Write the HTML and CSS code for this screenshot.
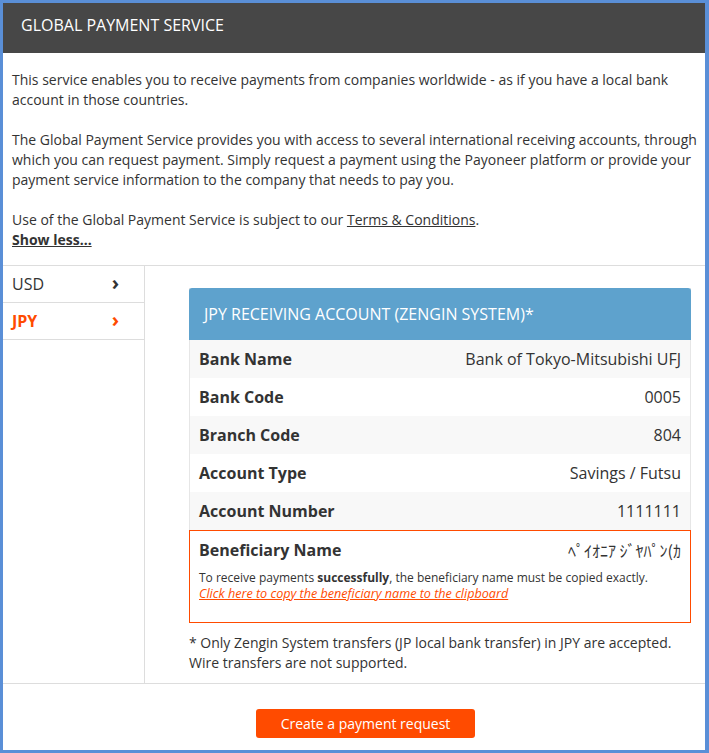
FILE: index.html
```html
<!DOCTYPE html>
<html>
<head>
<meta charset="utf-8">
<link rel="stylesheet" href="styles.css">
</head>
<body>
<div class="frame">
  <div class="topbar">GLOBAL PAYMENT SERVICE</div>
  <div class="intro">
    <p>This service enables you to receive payments from companies worldwide - as if you have a local bank account in those countries.</p>
    <p>The Global Payment Service provides you with access to several international receiving accounts, through which you can request payment. Simply request a payment using the Payoneer platform or provide your payment service information to the company that needs to pay you.</p>
    <p class="last">Use of the Global Payment Service is subject to our <a class="terms" href="#">Terms &amp; Conditions</a>.<br><a class="less" href="#">Show less...</a></p>
  </div>
  <div class="main">
    <div class="nav">
      <div class="nav-item"><span>USD</span><span class="chev">&#x203A;</span></div>
      <div class="nav-item active"><span>JPY</span><span class="chev">&#x203A;</span></div>
    </div>
    <div class="panel">
      <div class="card">
        <div class="card-head">JPY RECEIVING ACCOUNT (ZENGIN SYSTEM)*</div>
        <div class="row alt"><span class="lbl">Bank Name</span><span class="val">Bank of Tokyo-Mitsubishi UFJ</span></div>
        <div class="row"><span class="lbl">Bank Code</span><span class="val">0005</span></div>
        <div class="row alt"><span class="lbl">Branch Code</span><span class="val">804</span></div>
        <div class="row"><span class="lbl">Account Type</span><span class="val">Savings / Futsu</span></div>
        <div class="row alt"><span class="lbl">Account Number</span><span class="val">1111111</span></div>
        <div class="benef">
          <div class="benef-top"><span class="lbl">Beneficiary Name</span><span class="val jp">ﾍﾟｲｵﾆｱ ｼﾞﾔﾊﾟﾝ(ｶ</span></div>
          <div class="note">To receive payments <b>successfully</b>, the beneficiary name must be copied exactly.</div>
          <a class="copy" href="#">Click here to copy the beneficiary name to the clipboard</a>
        </div>
      </div>
      <p class="foot">* Only Zengin System transfers (JP local bank transfer) in JPY are accepted.<br>Wire transfers are not supported.</p>
    </div>
  </div>
  <div class="actions">
    <button class="btn">Create a payment request</button>
  </div>
</div>
</body>
</html>
```

FILE: styles.css
```css
html, body {
  margin: 0;
  padding: 0;
}
body {
  background: #5a8fd7;
  font-family: "Open Sans", "Noto Sans", sans-serif;
  color: #333;
  font-size: 14px;
  line-height: 20px;
}
.frame {
  margin: 3px 4px 3px 3px;
  background: #fff;
  height: 747px;
  display: flex;
  flex-direction: column;
}
.topbar {
  background: #474747;
  color: #fff;
  height: 44px;
  line-height: 44px;
  padding-bottom: 6px;
  font-size: 16px;
  padding-left: 18px;
  flex: none;
}
.intro {
  padding: 17px 2px 15px 9px;
  border-bottom: 1px solid #dddddd;
}
.intro p {
  margin: 0 0 20px 0;
}
.intro p.last {
  margin: 0;
}
.terms {
  color: #333;
  text-decoration: underline;
}
.less {
  color: #333;
  font-weight: 700;
  text-decoration: underline;
}
.main {
  display: flex;
  border-bottom: 1px solid #dddddd;
}
.nav {
  width: 141px;
  border-right: 1px solid #dddddd;
  flex: none;
}
.nav-item {
  height: 36px;
  border-bottom: 1px solid #dddddd;
  display: flex;
  align-items: center;
  justify-content: space-between;
  padding: 0 25px 0 9px;
  font-size: 16px;
  color: #333;
}
.nav-item .chev {
  font-weight: 700;
  font-size: 20px;
  line-height: 20px;
  margin-top: -3px;
}
.nav-item.active {
  color: #ff4b00;
  font-weight: 700;
}
.panel {
  flex: 1;
  padding: 22px 14px 10px 44px;
}
.card {
  border-left: 1px solid #e6e6e6;
  border-right: 1px solid #e6e6e6;
}
.card-head {
  background: #5ea2cd;
  color: #fff;
  height: 52px;
  line-height: 52px;
  font-size: 16px;
  padding-left: 15px;
  border-radius: 3px 3px 0 0;
  margin: 0 -1px;
}
.row {
  height: 38px;
  display: flex;
  align-items: center;
  justify-content: space-between;
  padding: 0 9px 0 9px;
}
.row.alt {
  background: #f8f8f8;
}
.lbl {
  font-weight: 700;
  font-size: 16px;
}
.val {
  font-size: 16px;
}
.jp {
  font-family: "Noto Sans CJK JP", sans-serif;
  font-size: 16px;
}
.benef {
  border: 1px solid #ff4b00;
  margin: 0 -1px;
  padding: 8px 9px 20px 9px;
}
.benef-top {
  display: flex;
  justify-content: space-between;
  align-items: center;
  height: 22px;
  margin-bottom: 9px;
}
.note {
  font-size: 12px;
  line-height: 16px;
}
.copy {
  display: block;
  font-size: 12.6px;
  line-height: 16px;
  color: #ff4b00;
  font-style: italic;
  text-decoration: underline;
}
.foot {
  margin: 10px 0 0 0;
}
.actions {
  flex: 1;
  padding: 25px 0 0 253px;
}
.btn {
  width: 219px;
  height: 29px;
  background: #ff4b00;
  color: #fff;
  border: none;
  border-radius: 3px;
  font-family: "Open Sans", sans-serif;
  font-size: 14px;
  padding: 0;
}
```
